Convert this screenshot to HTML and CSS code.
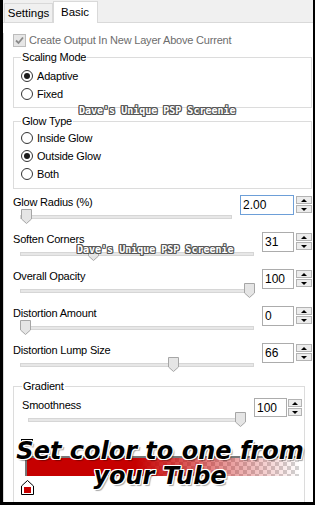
FILE: index.html
```html
<!DOCTYPE html>
<html>
<head>
<title>Glow - Basic</title>
<link rel="stylesheet" href="styles.css">
</head>
<body>
<div class="window">
  <div class="tabs">
    <div class="tab">Settings</div>
    <div class="tab active">Basic</div>
  </div>

  <div class="panel">
    <div class="check-row">
      <span class="checkbox"><svg width="13" height="13" viewBox="0 0 13 13"><polyline points="3,6.5 5.5,9 10,3.5" fill="none" stroke="#8a8a8a" stroke-width="1.8"/></svg></span>
      <span>Create Output In New Layer Above Current</span>
    </div>

    <fieldset class="group">
      <legend>Scaling Mode</legend>
      <div class="radio-row first"><span class="radio on"></span>Adaptive</div>
      <div class="radio-row"><span class="radio"></span>Fixed</div>
    </fieldset>

    <fieldset class="group glow">
      <legend>Glow Type</legend>
      <div class="radio-row first"><span class="radio"></span>Inside Glow</div>
      <div class="radio-row"><span class="radio on"></span>Outside Glow</div>
      <div class="radio-row"><span class="radio"></span>Both</div>
    </fieldset>

    <div class="ctrl first-ctrl">
      <div class="ctrl-label">Glow Radius (%)</div>
      <div class="slider"><span class="thumb" style="left:1px"></span></div>
      <div class="spin">
        <div class="spin-box wide focus">2.00</div>
        <div class="spin-btns"><span class="up"></span><span class="down"></span></div>
      </div>
    </div>

    <div class="ctrl">
      <div class="ctrl-label">Soften Corners</div>
      <div class="slider"><span class="thumb" style="left:68px"></span></div>
      <div class="spin">
        <div class="spin-box">31</div>
        <div class="spin-btns"><span class="up"></span><span class="down"></span></div>
      </div>
    </div>

    <div class="ctrl">
      <div class="ctrl-label">Overall Opacity</div>
      <div class="slider"><span class="thumb" style="left:224px"></span></div>
      <div class="spin">
        <div class="spin-box">100</div>
        <div class="spin-btns"><span class="up"></span><span class="down"></span></div>
      </div>
    </div>

    <div class="ctrl">
      <div class="ctrl-label">Distortion Amount</div>
      <div class="slider"><span class="thumb" style="left:0px"></span></div>
      <div class="spin">
        <div class="spin-box">0</div>
        <div class="spin-btns"><span class="up"></span><span class="down"></span></div>
      </div>
    </div>

    <div class="ctrl">
      <div class="ctrl-label">Distortion Lump Size</div>
      <div class="slider"><span class="thumb" style="left:148px"></span></div>
      <div class="spin">
        <div class="spin-box">66</div>
        <div class="spin-btns"><span class="up"></span><span class="down"></span></div>
      </div>
    </div>

    <fieldset class="group gradient">
      <legend>Gradient</legend>
      <div class="ctrl smooth">
        <div class="ctrl-label">Smoothness</div>
        <div class="slider"><span class="thumb" style="left:207px"></span></div>
        <div class="spin small">
          <div class="spin-box">100</div>
          <div class="spin-btns"><span class="up"></span><span class="down"></span></div>
        </div>
      </div>
      <div class="grad-wrap">
        <div class="stop-top"></div>
        <div class="grad-bar"></div>
        <div class="stop">
          <svg width="13" height="15" viewBox="0 0 13 15"><polygon points="6.5,0.5 12.5,6 12.5,14.5 0.5,14.5 0.5,6" fill="#fff" stroke="#000"/><rect x="3" y="7" width="7" height="6" fill="#c80000"/></svg>
        </div>
      </div>
    </fieldset>
  </div>

  <!-- watermarks and caption laid over the dialog -->
  <div class="wm wm-one">Dave's Unique PSP Screenie</div>
  <div class="wm wm-two">Dave's Unique PSP Screenie</div>
  <div class="caption">Set color to one from<br>your Tube</div>
</div>
</body>
</html>
```
FILE: styles.css
```css
body {
  margin: 0;
  background: #000;
  width: 315px;
  height: 505px;
  overflow: hidden;
  font-family: "Liberation Sans", Arial, sans-serif;
  font-size: 11px;
  letter-spacing: -0.2px;
  color: #000;
}

.window {
  position: relative;
  width: 310px;
  height: 502px;
  margin-left: 3px;
  background: #fff;
  overflow: hidden;
}

/* tab strip */
.tabs {
  height: 22px;
  background: #f0f0f0;
  border-bottom: 1px solid #d9d9d9;
  display: flex;
  align-items: flex-end;
  padding-left: 1px;
  font-size: 11.5px;
  letter-spacing: 0;
}
.tab {
  height: 18px;
  width: 47px;
  border: 1px solid #d9d9d9;
  border-bottom: none;
  background: #f0f0f0;
  text-align: center;
  line-height: 19px;
}
.tab.active {
  height: 22px;
  width: 45px;
  box-sizing: border-box;
  background: #fff;
  margin-bottom: -1px;
  line-height: 20px;
  text-align: left;
  padding-left: 7px;
}

.panel {
  border-left: 1px solid #d9d9d9;
  padding: 0 1px 0 9px;
  height: 479px;
}

/* disabled checkbox */
.check-row {
  margin-top: 10px;
  height: 14px;
  line-height: 14px;
  display: flex;
  align-items: center;
  gap: 3px;
  color: #6d6d6d;
}
.checkbox {
  width: 13px;
  height: 13px;
  box-sizing: border-box;
  border: 1px solid #bcbcbc;
  background: #e6e6e6;
  display: flex;
}
.checkbox svg { margin: -1px; }

/* group boxes */
.group {
  margin: 3px 0 0 0;
  padding: 0 0 4px 7px;
  border: 1px solid #dcdcdc;
  min-width: 0;
}
.group legend {
  padding: 0 1px;
  line-height: 14px;
}
.group.glow {
  margin-top: 6px;
  padding-bottom: 5px;
}

.radio-row {
  height: 18px;
  display: flex;
  align-items: center;
  gap: 4px;
}
.radio-row.first { margin-top: 3px; }
.glow .radio-row.first { margin-top: 1px; }
.radio {
  width: 12px;
  height: 12px;
  box-sizing: border-box;
  border: 1px solid #333;
  border-radius: 50%;
  background: #fff;
  display: flex;
  align-items: center;
  justify-content: center;
}
.radio.on::after {
  content: "";
  width: 6px;
  height: 6px;
  border-radius: 50%;
  background: #1b1b1b;
}

/* slider + spin rows */
.ctrl {
  display: grid;
  grid-template-columns: 1fr auto;
  grid-template-rows: 14px 16px;
  margin-top: 7px;
}
.ctrl.first-ctrl { margin-top: 6px; }
.ctrl-label {
  line-height: 14px;
  white-space: nowrap;
}
.slider {
  position: relative;
  margin: 0 8px 0 7px;
  height: 16px;
}
.slider::before {
  content: "";
  position: absolute;
  left: 0;
  right: 0;
  top: 6px;
  height: 4px;
  box-sizing: border-box;
  background: #e7e7e7;
  border: 1px solid #d6d6d6;
}
.thumb {
  position: absolute;
  top: 0;
  width: 11px;
  height: 15px;
  background: url("data:image/svg+xml,%3Csvg xmlns='http://www.w3.org/2000/svg' width='11' height='15'%3E%3Cpolygon points='0.5,0.5 10.5,0.5 10.5,10 5.5,14.5 0.5,10' fill='%23e5e5e5' stroke='%23a6a6a6'/%3E%3C/svg%3E") no-repeat;
}

.spin {
  grid-column: 2;
  grid-row: 1 / 3;
  align-self: start;
  display: flex;
  gap: 2px;
}
.spin-box {
  width: 32px;
  height: 20px;
  box-sizing: border-box;
  border: 1px solid #acacac;
  padding-left: 2px;
  line-height: 18px;
  font-size: 12px;
  letter-spacing: 0;
}
.spin-box.wide { width: 54px; }
.spin-box.focus { border-color: #6d9fd8; }
.spin-btns {
  width: 16px;
  display: flex;
  flex-direction: column;
  gap: 1px;
  padding-top: 1px;
}
.spin-btns span {
  height: 8px;
  box-sizing: border-box;
  border: 1px solid #b3b3b3;
  background: #ececec;
  display: flex;
  align-items: center;
  justify-content: center;
}
.spin-btns .up::after {
  content: "";
  border-left: 3px solid transparent;
  border-right: 3px solid transparent;
  border-bottom: 3px solid #000;
}
.spin-btns .down::after {
  content: "";
  border-left: 3px solid transparent;
  border-right: 3px solid transparent;
  border-top: 3px solid #000;
}

/* gradient group */
.group.gradient {
  margin: 6px 7px 0 0;
  padding: 0 2px 0 8px;
  height: 200px;
}
.ctrl.smooth {
  margin-top: 5px;
}
.ctrl.smooth .slider {
  margin-left: 6px;
  margin-right: 8px;
}
.spin.small { gap: 1px; }
.spin.small .spin-box { width: 33px; height: 19px; }
.spin.small .spin-btns { width: 14px; }

.grad-wrap {
  margin-top: 11px;
  margin-left: -1px;
}
.stop-top {
  width: 12px;
  height: 4px;
  box-sizing: border-box;
  border: 1px solid #000;
  border-bottom: none;
}
.grad-bar {
  margin: 13px 0 0 4px;
  width: 274px;
  height: 20px;
  box-sizing: border-box;
  border-top: 2px solid #777;
  border-left: 2px solid #777;
  background:
    linear-gradient(to right, #c60000 0%, #c60000 40%, rgba(198, 0, 0, 0.45) 70%, rgba(198, 0, 0, 0) 100%),
    repeating-conic-gradient(#d2d2d2 0 25%, #fff 0 50%) 0 0 / 8px 8px;
}
.stop {
  margin-top: 4px;
  height: 15px;
}
.stop svg { display: block; }

/* overlays */
.wm {
  position: absolute;
  font-family: "DejaVu Sans Mono", monospace;
  font-weight: bold;
  font-size: 10px;
  line-height: 11px;
  letter-spacing: 0;
  color: #fff;
  white-space: nowrap;
  text-shadow: 1px 0 0 #555, -1px 0 0 #555, 0 1px 0 #555, 0 -1px 0 #555,
    1px 1px 0 #555, -1px -1px 0 #555, 1px -1px 0 #555, -1px 1px 0 #555;
}
.wm-one { left: 76px; top: 105px; }
.wm-two { left: 74px; top: 244px; }

.caption {
  position: absolute;
  left: 4px;
  right: 0;
  top: 439px;
  text-align: center;
  font-family: "DejaVu Sans", Verdana, sans-serif;
  font-weight: bold;
  font-style: oblique;
  font-size: 24px;
  line-height: 25px;
  letter-spacing: 0;
  color: #000;
  text-shadow: 1px 0 0 #fff, -1px 0 0 #fff, 0 1px 0 #fff, 0 -1px 0 #fff,
    1px 1px 0 #fff, -1px -1px 0 #fff, 1px -1px 0 #fff, -1px 1px 0 #fff,
    2px 2px 1px rgba(0, 0, 0, 0.35);
}
```
